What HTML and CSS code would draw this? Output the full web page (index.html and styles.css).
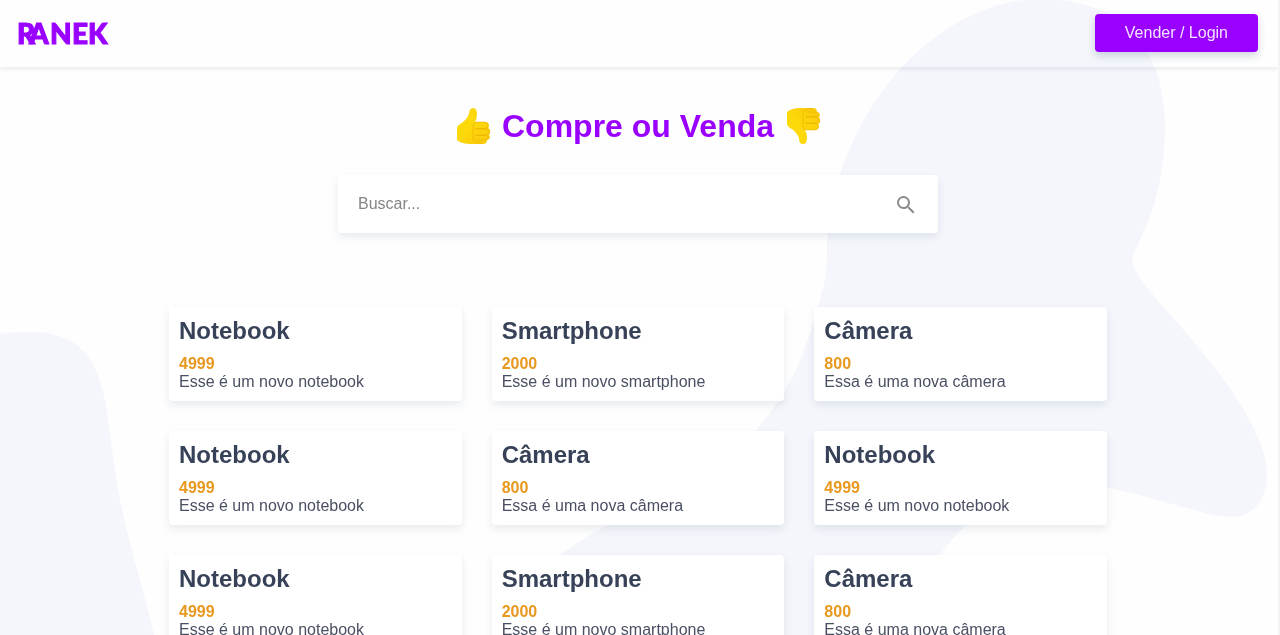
FILE: index.html
```html
<!DOCTYPE html>
<html lang="pt-BR">
<head>
<meta charset="utf-8">
<title>Ranek</title>
<link rel="stylesheet" href="styles.css">
</head>
<body>
<svg class="backdrop" viewBox="0 0 1280 635" preserveAspectRatio="xMidYMin slice" aria-hidden="true">
  <path d="M0 334C60 327 92 337 105 400C113 444 113 480 133 555Q146 600 154 635H0Z"/>
  <path d="M1040 -1C960 -1 870 70 837 185C822 235 830 250 825 280C810 340 795 390 751 435C700 490 620 510 560 555C530 580 510 605 500 635H900C910 600 925 570 942 552C980 500 1040 475 1100 486C1160 498 1200 515 1232 517C1253 517 1267 500 1267 474C1267 430 1215 365 1175 320C1145 286 1132 270 1132 258C1135 246 1165 205 1165 127C1165 45 1120 -1 1040 -1Z"/>
</svg>
<header class="header">
  <a class="logo" href="#" aria-label="Ranek">
    <svg width="92" height="24" viewBox="0 0 92 24"><text x="-1 11 32 54 70" y="22">RANEK</text></svg>
  </a>
  <a class="btn" href="#">Vender / Login</a>
</header>
<main>
  <h1 class="title">
    <svg class="emoji" viewBox="0 0 38 40" aria-hidden="true"><use href="#thumb"/></svg>
    <span>Compre ou Venda</span>
    <svg class="emoji emoji-down" viewBox="0 0 38 40" aria-hidden="true">
      <defs>
        <linearGradient id="skin" x1="0" y1="0" x2="1" y2="1"><stop offset="0.4" stop-color="#fdd90a"/><stop offset="1" stop-color="#f9c80c"/></linearGradient>
        <g id="thumb">
        <path d="M3 22Q3 20 6 18Q12 15 15 8Q15 2 19 2Q23 2 23 8Q23 13 21 16H31Q35 16 35 20Q35 21 34 22Q37 23 36 26Q36 28 35 29Q37 31 35 33Q34 34 33 34Q33 38 29 38H17Q7 38 3 34Z" fill="url(#skin)"/>
        <path d="M19 20Q19 16 23 16H31Q35 17 34 20Q34 22 31 22.500H21M22 23H33Q36 24 35 27Q34 29 31 29H21M22 29.500H33Q35 31 34 33Q33 34 30 34H22M19 20V34Q22 38 29 37" fill="none" stroke="#e8ad00" stroke-opacity="0.6" stroke-width="0.900"/>
      </g></defs><use href="#thumb"/></svg>
  </h1>
  <form class="search">
    <input class="search-input" type="text" placeholder="Buscar..." aria-label="Buscar">
    <button class="search-btn" type="button" aria-label="Buscar">
      <svg width="24" height="24" viewBox="0 0 24 24"><path fill="#8b8b8b" d="M15.5 14h-.79l-.28-.27A6.47 6.47 0 0 0 16 9.500 6.500 6.500 0 1 0 9.500 16c1.610 0 3.090-.59 4.230-1.570l.27.28v.79l5 4.990L20.490 19l-4.990-5zm-6 0C7.010 14 5 11.990 5 9.500S7.010 5 9.500 5 14 7.010 14 9.500 11.990 14 9.500 14z"/></svg>
    </button>
  </form>
  <section class="products">
    <a class="card" href="#"><h2>Notebook</h2><p class="price">4999</p><p>Esse é um novo notebook</p></a>
    <a class="card" href="#"><h2>Smartphone</h2><p class="price">2000</p><p>Esse é um novo smartphone</p></a>
    <a class="card" href="#"><h2>Câmera</h2><p class="price">800</p><p>Essa é uma nova câmera</p></a>
    <a class="card" href="#"><h2>Notebook</h2><p class="price">4999</p><p>Esse é um novo notebook</p></a>
    <a class="card" href="#"><h2>Câmera</h2><p class="price">800</p><p>Essa é uma nova câmera</p></a>
    <a class="card" href="#"><h2>Notebook</h2><p class="price">4999</p><p>Esse é um novo notebook</p></a>
    <a class="card" href="#"><h2>Notebook</h2><p class="price">4999</p><p>Esse é um novo notebook</p></a>
    <a class="card" href="#"><h2>Smartphone</h2><p class="price">2000</p><p>Esse é um novo smartphone</p></a>
    <a class="card" href="#"><h2>Câmera</h2><p class="price">800</p><p>Essa é uma nova câmera</p></a>
  </section>
</main>
</body>
</html>
```
FILE: styles.css
```css
* { box-sizing: border-box; margin: 0; padding: 0; }
html { overflow-x: hidden; scrollbar-width: none; }
body {
  font-family: "Liberation Sans", Arial, sans-serif;
  font-size: 16px;
  line-height: 18px;
  color: #4a5063;
  background: #fefefe;
  border-right: 2px solid #f4f4f6;
}
main { padding-right: 2px; }
a { color: inherit; text-decoration: none; }
.backdrop { position: fixed; inset: 0; width: 100%; height: 100%; z-index: -1; fill: #f4f6fb; }
.header {
  display: flex;
  justify-content: space-between;
  align-items: flex-start;
  padding: 14px 20px 15px 18px;
  box-shadow: 0 2px 4px rgba(30, 60, 90, 0.1);
}
.logo { padding-top: 8px; }
.logo svg { display: block; overflow: visible; }
.logo text {
  font-family: Lato, sans-serif;
  font-weight: 900;
  font-size: 28px;
  fill: #9a00ff;
  stroke: #9a00ff;
  stroke-width: 1px;
}
.btn {
  padding: 10px 30px;
  border-radius: 4px;
  background: #9a00ff;
  color: #f3e2ff;
  box-shadow: 0 4px 8px rgba(30, 60, 90, 0.2);
}
.title {
  display: flex;
  justify-content: center;
  align-items: center;
  gap: 10px;
  margin-top: 39px;
  font-size: 32px;
  line-height: 40px;
  color: #9a00ff;
}
.emoji { width: 38px; height: 40px; }
.emoji-down { transform: scaleY(-1); }
.search {
  display: flex;
  align-items: center;
  max-width: 600px;
  margin: 29px auto 0;
  border-radius: 4px;
  background: #fff;
  box-shadow: 0 4px 8px rgba(30, 60, 90, 0.1);
}
.search-input {
  flex: 1;
  min-width: 0;
  height: 58px;
  padding: 0 20px;
  border: 0;
  background: none;
  font: inherit;
  outline: 0;
}
.search-input::placeholder { color: #858585; }
.search-btn { padding: 2px 20px 0; border: 0; background: none; }
.search-btn svg { display: block; }
.products {
  display: grid;
  grid-template-columns: repeat(3, 1fr);
  gap: 30px;
  max-width: 938px;
  margin: 74px auto 30px;
}
.card {
  padding: 10px;
  border-radius: 4px;
  background: #fff;
  box-shadow: 0 4px 8px rgba(30, 60, 90, 0.1);
}
.card h2 { margin-bottom: 10px; font-size: 24px; line-height: 28px; color: #374259; }
.card .price { font-weight: bold; color: #e8981f; }
```
